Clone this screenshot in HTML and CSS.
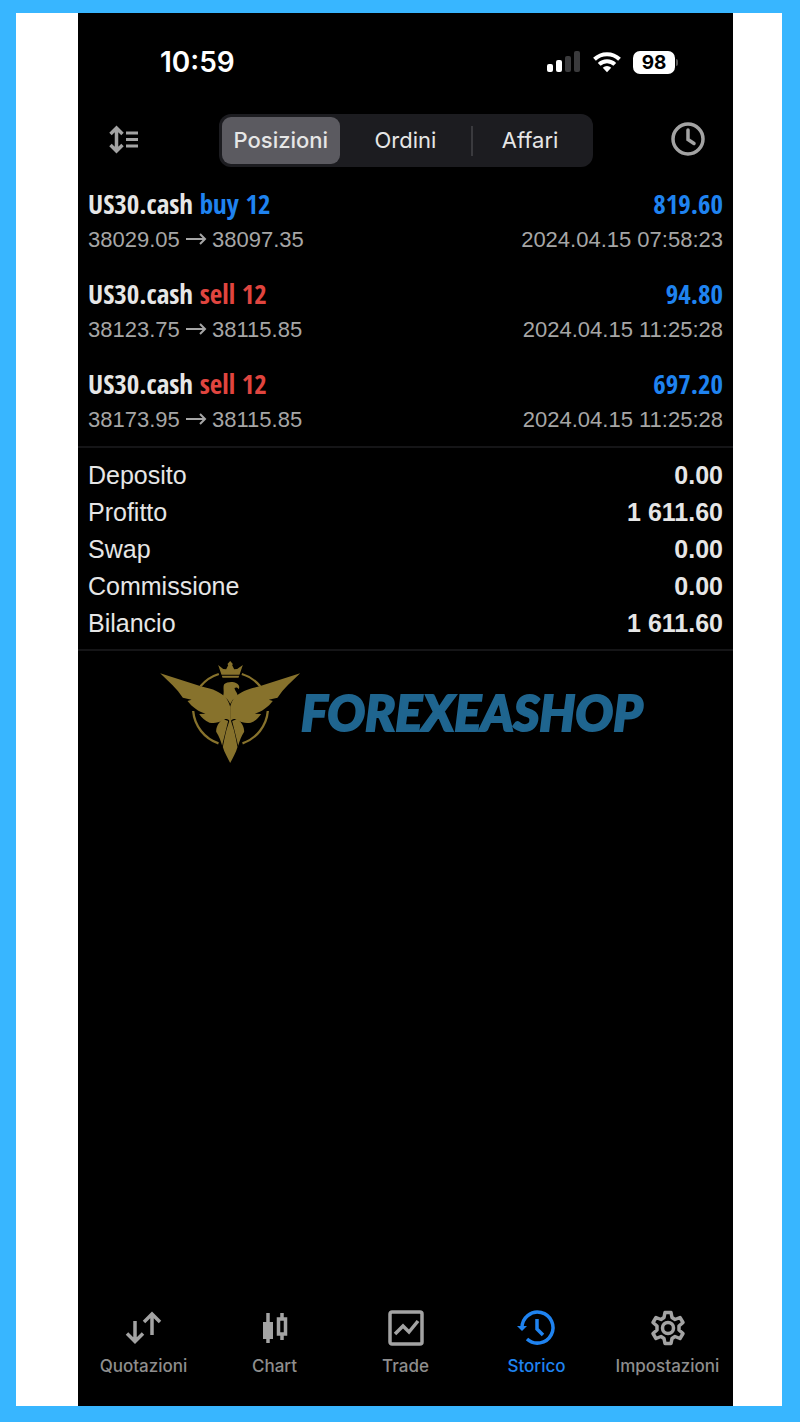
FILE: index.html
```html
<!DOCTYPE html>
<html lang="it">
<head>
    <meta charset="UTF-8">
    <meta name="viewport" content="width=device-width, initial-scale=1.0">
    <title>Storico</title>
    <link rel="stylesheet" href="styles.css">
</head>
<body>

    <div class="phone">
        <div class="status-bar">
            <span class="clock">10:59</span>
            <div class="status-icons">
                <svg width="34" height="22" viewBox="0 0 34 22">
                    <rect x="0" y="13" width="6" height="8" rx="2" fill="#fff"/>
                    <rect x="9" y="9" width="6" height="12" rx="2" fill="#fff"/>
                    <rect x="18" y="5" width="6" height="16" rx="2" fill="#3a3a3c"/>
                    <rect x="27" y="0" width="6" height="21" rx="2" fill="#3a3a3c"/>
                </svg>
                <svg width="28" height="22" viewBox="0 0 28 22" fill="none" stroke="#fff" stroke-width="4">
                    <path d="M1.5 8.2a18 18 0 0 1 25 0"/>
                    <path d="M6.2 13.4a11.2 11.2 0 0 1 15.6 0"/>
                    <path d="M14 21.2l-4.2-4.4a6 6 0 0 1 8.4 0z" fill="#fff" stroke="none"/>
                </svg>
                <span class="battery">98</span>
            </div>
        </div>

        <div class="toolbar">
            <button class="icon-button" aria-label="Ordina">
                <svg width="32" height="30" viewBox="0 0 32 30" fill="none" stroke="currentColor" stroke-width="3.5">
                    <path d="M8.5 4.5v22M2.5 10l6-6 6 6M2.5 21l6 6 6-6"/>
                    <path d="M18 9h12M18 15.5h12M18 22h12" stroke-width="3"/>
                </svg>
            </button>
            <div class="segmented">
                <button class="segment active">Posizioni</button>
                <button class="segment">Ordini</button>
                <button class="segment divided">Affari</button>
            </div>
            <button class="icon-button" aria-label="Periodo">
                <svg width="34" height="34" viewBox="0 0 34 34" fill="none" stroke="currentColor" stroke-width="3.5">
                    <circle cx="17" cy="17" r="15"/>
                    <path d="M17 8v9.5l6 4" stroke-linecap="round"/>
                </svg>
            </button>
        </div>

        <div class="positions">
            <div class="position">
                <div class="line title">
                    <span>US30.cash <span class="buy">buy 12</span></span>
                    <span class="amount">819.60</span>
                </div>
                <div class="line details">
                    <span class="prices">38029.05 <svg class="arrow" width="20" height="14" viewBox="0 0 20 14"><path d="M0 6h19M14 1l5 5-5 5"/></svg> 38097.35</span>
                    <span>2024.04.15 07:58:23</span>
                </div>
            </div>
            <div class="position">
                <div class="line title">
                    <span>US30.cash <span class="sell">sell 12</span></span>
                    <span class="amount">94.80</span>
                </div>
                <div class="line details">
                    <span class="prices">38123.75 <svg class="arrow" width="20" height="14" viewBox="0 0 20 14"><path d="M0 6h19M14 1l5 5-5 5"/></svg> 38115.85</span>
                    <span>2024.04.15 11:25:28</span>
                </div>
            </div>
            <div class="position">
                <div class="line title">
                    <span>US30.cash <span class="sell">sell 12</span></span>
                    <span class="amount">697.20</span>
                </div>
                <div class="line details">
                    <span class="prices">38173.95 <svg class="arrow" width="20" height="14" viewBox="0 0 20 14"><path d="M0 6h19M14 1l5 5-5 5"/></svg> 38115.85</span>
                    <span>2024.04.15 11:25:28</span>
                </div>
            </div>
        </div>

        <dl class="summary">
            <div class="line"><dt>Deposito</dt><dd>0.00</dd></div>
            <div class="line"><dt>Profitto</dt><dd>1 611.60</dd></div>
            <div class="line"><dt>Swap</dt><dd>0.00</dd></div>
            <div class="line"><dt>Commissione</dt><dd>0.00</dd></div>
            <div class="line"><dt>Bilancio</dt><dd>1 611.60</dd></div>
        </dl>

        <div class="brand">
            <svg width="141" height="102" viewBox="30 31 422 306" fill="#87722c">
                <!-- ring -->
                <g fill="none" stroke="#87722c" stroke-width="7">
                    <path d="M151 107a113 113 0 0 1 55-37M275 70a113 113 0 0 1 55 37"/>
                    <path d="M129 181a113 113 0 0 0 76 97M353 181a113 113 0 0 1-76 97"/>
                </g>
                <!-- crown -->
                <path d="M204 43l15 12 9 1 6-12-2-4 8-9 8 9-2 4 6 12 9-1 17-12-10 29h-54zM215 75h52l-2 6h-48z"/>
                <!-- head -->
                <path d="M222 101C230 93 250 93 257 97C267 101 269 108 266 116C262 109 257 110 253 112C255 122 262 126 263 138L248 147L240 160C236 148 228 141 218 138C224 125 217 111 222 101z"/>
                <!-- wings -->
                <g id="wing">
                    <path d="M30 68L152 107C172 112 186 115 198 121C222 132 234 145 240 168V215C234 200 224 205 218 209C205 217 190 219 178 216C164 211 155 201 147 190L166 189C146 184 125 168 112 151L124 147L98 141C80 114 55 92 30 68z"/>
                </g>
                <use href="#wing" transform="translate(480 0) scale(-1 1)"/>
                <!-- tail -->
                <path d="M218 205c-14 11-20 25-20 38 9 15 14 27 18 42 4-17 8-34 18-74zM262 205c14 11 20 25 20 38-9 15-14 27-18 42-4-17-8-34-18-74z"/>
                <path d="M240 203l11 34c5 20 8 35 11 52-5 17-13 32-22 48-8-16-17-31-22-48 3-17 6-32 11-52z"/>
            </svg>
            <span class="brand-name">FOREXEASHOP</span>
        </div>

        <nav class="tab-bar">
            <a href="#quotazioni" class="tab">
                <svg width="36" height="36" viewBox="0 0 36 36" fill="none" stroke="currentColor" stroke-width="3.5">
                    <path d="M9 11v21M1 23.5l8 8 8-8M26 25V4M18 12l8-8 8 8"/>
                </svg>
                Quotazioni
            </a>
            <a href="#chart" class="tab">
                <svg width="36" height="36" viewBox="0 0 36 36" fill="none" stroke="currentColor" stroke-width="3.5">
                    <path d="M11 3v30M25 3v6M25 24v6"/>
                    <path d="M6 12h10v17H6z" fill="currentColor" stroke="none"/>
                    <path d="M21.5 9h7v15h-7z"/>
                </svg>
                Chart
            </a>
            <a href="#trade" class="tab">
                <svg width="36" height="36" viewBox="0 0 36 36" fill="none" stroke="currentColor" stroke-width="3.5">
                    <rect x="2" y="2" width="32" height="32" rx="2"/>
                    <path d="M7 24l8-8 6 6 9-11"/>
                </svg>
                Trade
            </a>
            <a href="#storico" class="tab active">
                <svg width="36" height="36" viewBox="0 0 36 36" fill="none" stroke="currentColor" stroke-width="3.5">
                    <path d="M3 18a15.500 15.500 0 1 1 5 11"/>
                    <path d="M-2 16h10l-5 5z" fill="currentColor" stroke="none"/>
                    <path d="M18 9v10l6 6"/>
                </svg>
                Storico
            </a>
            <a href="#impostazioni" class="tab">
                <svg width="36" height="36" viewBox="0 0 36 36" fill="none" stroke="currentColor" stroke-width="3.5" stroke-linejoin="round">
                    <path d="M15 2.500h6l1 5 3 2 5-2 3 5-4 3.500v4l4 3.500-3 5-5-2-3 2-1 5h-6l-1-5-3-2-5 2-3-5 4-3.500v-4l-4-3.500 3-5 5 2 3-2z"/>
                    <circle cx="18" cy="18" r="5.500"/>
                </svg>
                Impostazioni
            </a>
        </nav>
    </div>

</body>
</html>
```

FILE: styles.css
```css
:root {
    --frame-color: #38b6ff;
    --blue: #1f83f0;
    --red: #e0453f;
    --icon-color: #a3a3a3;
    --label-color: #8e8e8e;
    --line-color: #151517;
    --font-data: "Liberation Sans", Arial, sans-serif;
    --font-ui: Inter, sans-serif;
    --font-narrow: "Open Sans Condensed", "Open Sans", sans-serif;
    --font-brand: Lato, sans-serif;
}
* {
    box-sizing: border-box;
}
body {
    margin: 0;
    min-height: 100vh;
    display: flex;
    padding: 0 49px 0 62px;
    border: solid var(--frame-color);
    border-width: 13px 18px 16px 16px;
    background-color: #fff;
    font-family: var(--font-data);
}
button {
    margin: 0;
    padding: 0;
    border: 0;
    background: none;
    font: inherit;
    color: inherit;
}
svg {
    display: block;
    overflow: visible;
}
.phone {
    flex: 1;
    display: flex;
    flex-direction: column;
    background-color: #000;
    color: #e6e6e6;
}

/* --- status bar --- */
.status-bar {
    display: flex;
    justify-content: space-between;
    align-items: center;
    height: 98px;
    padding: 0 58px 0 82px;
    font-family: var(--font-ui);
}
.clock {
    font-size: 28px;
    font-weight: 600;
    color: #fff;
}
.status-icons {
    display: flex;
    align-items: center;
    gap: 12px;
}
.battery {
    position: relative;
    width: 42px;
    border-radius: 7px;
    background-color: #fff;
    color: #000;
    font-size: 19px;
    font-weight: 700;
    line-height: 23px;
    text-align: center;
}
.battery::after {
    content: "";
    position: absolute;
    top: 8px;
    right: -3px;
    width: 2px;
    height: 7px;
    border-radius: 0 2px 2px 0;
    background-color: #555;
}

/* --- toolbar --- */
.toolbar {
    display: flex;
    justify-content: space-between;
    align-items: center;
    padding: 3px 28px 9px 30px;
}
.icon-button {
    padding-bottom: 3px;
    color: var(--icon-color);
}
.segmented {
    display: grid;
    grid-template-columns: repeat(3, 1fr);
    gap: 6px;
    width: 374px;
    padding: 3px;
    border-radius: 12px;
    background-color: #1c1c20;
    font-family: var(--font-ui);
    font-size: 22px;
    line-height: 47px;
}
.segment {
    border-radius: 9px;
}
.segment.active {
    background-color: #5b5a60;
    font-weight: 500;
}
.segment.divided {
    background: linear-gradient(#3a3a3e, #3a3a3e) left center / 2px 30px no-repeat;
    border-radius: 0;
}

/* --- positions --- */
.positions {
    border-bottom: 2px solid var(--line-color);
}
.position {
    padding: 10px 10px 8px;
}
.line {
    display: flex;
    justify-content: space-between;
}
.title {
    font-family: var(--font-narrow);
    font-size: 27px;
    font-weight: 700;
    line-height: 36px;
}
.details {
    font-size: 22px;
    line-height: 36px;
    color: #a6a6a6;
}
.arrow {
    display: inline-block;
    fill: none;
    stroke: currentColor;
    stroke-width: 2;
}
.buy, .amount {
    color: var(--blue);
}
.sell {
    color: var(--red);
}

/* --- summary --- */
.summary {
    margin: 0;
    padding: 9px 10px 7px;
    border-bottom: 2px solid var(--line-color);
    font-size: 25px;
    line-height: 37px;
}
.summary dd {
    margin: 0;
    font-weight: 700;
}

.brand {
    display: flex;
    align-items: center;
    padding: 10px 0 0 82px;
}
.brand-name {
    font-family: var(--font-brand);
    font-size: 50px;
    font-style: italic;
    font-weight: 900;
    line-height: 60px;
    color: #1f658f;
    -webkit-text-stroke: 2px #1f658f;
}

/* --- tab bar --- */
.tab-bar {
    display: grid;
    grid-template-columns: repeat(5, 1fr);
    margin-top: auto;
    padding-bottom: 28px;
}
.tab {
    display: flex;
    flex-direction: column;
    align-items: center;
    gap: 8px;
    color: var(--label-color);
    font-family: var(--font-ui);
    font-size: 17px;
    font-weight: 500;
    line-height: 24px;
    text-decoration: none;
}
.tab svg {
    color: var(--icon-color);
}
.tab.active, .tab.active svg {
    color: var(--blue);
}
```
